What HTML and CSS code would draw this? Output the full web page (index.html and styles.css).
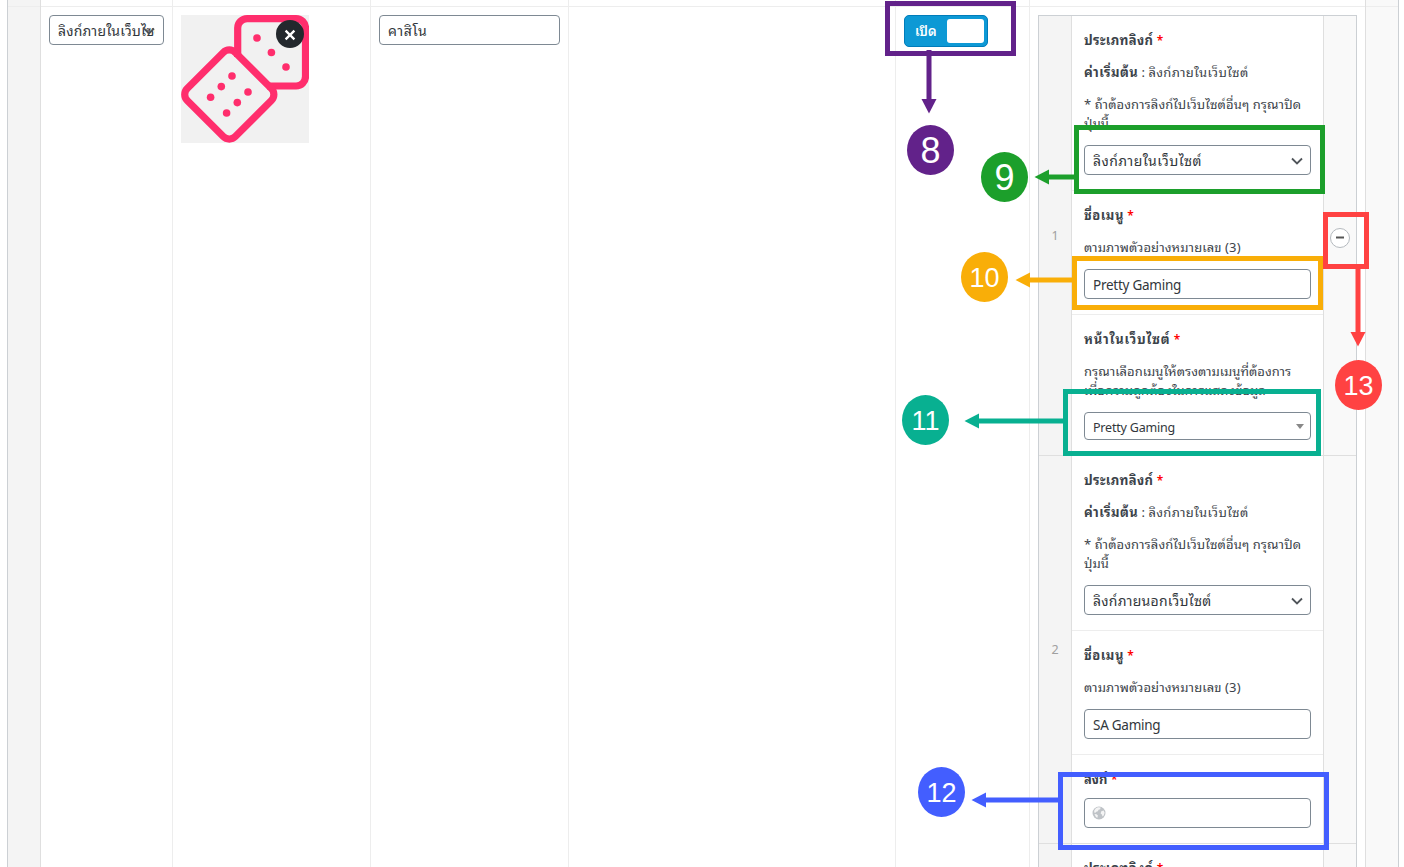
FILE: index.html
```html
<!DOCTYPE html>
<html lang="th">
<head>
<meta charset="utf-8">
<title>เมนู</title>
<link rel="stylesheet" href="styles.css">
</head>
<body>
<div class="table">
  <div class="handle"></div>
  <div class="cell c-type"><div class="input select clipped"><span class="t t-in1">ลิงก์ภายในเว็บไซต์</span><svg class="chev" viewBox="0 0 12 8"><path d="M1 1.500l5 5 5-5"/></svg></div></div>
  <div class="cell c-icon">
    <div class="thumb">
      <svg width="128" height="128" viewBox="0 0 128 128">
        <g fill="none" stroke="#ff2e6d" stroke-width="7.200">
          <path d="M56.700 42V13a9.400 9.400 0 0 1 9.400-9.400h49a9.400 9.400 0 0 1 9.400 9.400v48.600a9.400 9.400 0 0 1-9.400 9.400H86"/>
          <rect x="-34" y="-34" width="68" height="68" rx="8.500" transform="translate(48.300 79.500) rotate(45)"/>
        </g>
        <g fill="#ff2e6d"><circle cx="76" cy="23" r="3.800"/><circle cx="90.400" cy="37.500" r="3.800"/><circle cx="105" cy="52" r="3.800"/>
        <circle cx="51" cy="61" r="3.800"/><circle cx="40.300" cy="71.600" r="3.800"/><circle cx="29.600" cy="82.300" r="3.800"/><circle cx="67" cy="77" r="3.800"/><circle cx="56.300" cy="87.600" r="3.800"/><circle cx="45.600" cy="98" r="3.800"/></g>
        <circle cx="109" cy="19" r="14" fill="#23282d"/>
        <path d="M104.600 15.600l8.800 8.800m0-8.800l-8.800 8.800" stroke="#fff" stroke-width="2.300"/>
      </svg>
    </div>
  </div>
  <div class="cell c-name"><div class="input thai"><span class="t t-casino">คาสิโน</span></div></div>
  <div class="cell c-blank"></div>
  <div class="cell c-switch"><div class="switch"><span class="on">เปิด</span><span class="knob"></span></div></div>
  <div class="cell c-sub">
    <div class="sub">
      <div class="row">
        <div class="num">1</div>
        <div class="fields">
          <div class="field">
            <div class="label"><span class="t t-type">ประเภทลิงก์</span> <i>*</i></div>
            <p class="lead"><b class="t t-def">ค่าเริ่มต้น</b> : <span class="t t-in2">ลิงก์ภายในเว็บไซต์</span></p>
            <p><span class="t t-note">* ถ้าต้องการลิงก์ไปเว็บไซต์อื่นๆ กรุณาปิด</span><br><span>ปุ่มนี้</span></p>
            <div class="input select"><span class="t t-in1">ลิงก์ภายในเว็บไซต์</span><svg class="chev" viewBox="0 0 12 8"><path d="M1 1.500l5 5 5-5"/></svg></div>
          </div>
          <div class="field">
            <div class="label"><span class="t t-menu">ชื่อเมนู</span> <i>*</i></div>
            <p><span class="t t-ex">ตามภาพตัวอย่างหมายเลข (3)</span></p>
            <div class="input latin"><span>Pretty Gaming</span></div>
          </div>
          <div class="field">
            <div class="label"><span class="t t-page">หน้าในเว็บไซต์</span> <i>*</i></div>
            <p><span class="t t-l1">กรุณาเลือกเมนูให้ตรงตามเมนูที่ต้องการ</span><br><span class="t t-l2">เพื่อความถูกต้องในการแสดงข้อมูล</span></p>
            <div class="input select2"><span>Pretty Gaming</span><span class="tri"></span></div>
          </div>
        </div>
        <div class="act"><svg class="minus" viewBox="0 0 20 20"><circle cx="10" cy="10" r="9.500"/><path d="M6 9.500h8"/></svg></div>
      </div>
      <div class="row">
        <div class="num">2</div>
        <div class="fields">
          <div class="field">
            <div class="label"><span class="t t-type">ประเภทลิงก์</span> <i>*</i></div>
            <p class="lead"><b class="t t-def">ค่าเริ่มต้น</b> : <span class="t t-in2">ลิงก์ภายในเว็บไซต์</span></p>
            <p><span class="t t-note">* ถ้าต้องการลิงก์ไปเว็บไซต์อื่นๆ กรุณาปิด</span><br><span>ปุ่มนี้</span></p>
            <div class="input select"><span class="t t-out">ลิงก์ภายนอกเว็บไซต์</span><svg class="chev" viewBox="0 0 12 8"><path d="M1 1.500l5 5 5-5"/></svg></div>
          </div>
          <div class="field">
            <div class="label"><span class="t t-menu">ชื่อเมนู</span> <i>*</i></div>
            <p><span class="t t-ex">ตามภาพตัวอย่างหมายเลข (3)</span></p>
            <div class="input latin"><span>SA Gaming</span></div>
          </div>
          <div class="field url">
            <div class="label"><span>ลิงก์</span> <i>*</i></div>
            <div class="input"><svg class="globe" viewBox="0 0 14 14"><circle cx="7" cy="7" r="6.500"/><path d="M6 1.300l2.600.3-.4 1.600-1.700.6-.6 1.400-1.600.5-.9 1-1.300-.2.300-2.300 1.500-2zM2.500 8l2 .2 1.400 1.300-.5 2.300-1.500-.8zM9.300 5.200l2.300-.7 1 2.300-.9 2.800-1.200.9-.6-1.900-1.300-1.200z"/></svg></div>
          </div>
        </div>
        <div class="act"></div>
      </div>
      <div class="row">
        <div class="num"></div>
        <div class="fields"><div class="field"><div class="label"><span class="t t-type">ประเภทลิงก์</span> <i>*</i></div></div></div>
        <div class="act"></div>
      </div>
    </div>
  </div>
  <div class="remove"></div>
</div>
<svg class="notes" width="1404" height="867" viewBox="0 0 1404 867">
  <g fill="none" stroke-width="5">
    <g stroke="#62228a"><path d="M887.500 3.500h126v50h-126zM929 50v50"/></g>
    <g stroke="#1c9f2b"><path d="M1076.500 127.500h246v64h-246zM1048 177h27"/></g>
    <g stroke="#f9ae08"><path d="M1074.500 258.500h246v49h-246zM1029 280h44"/></g>
    <g stroke="#08b091"><path d="M1065.500 391.500h253v62h-253zM978 421h86"/></g>
    <g stroke="#435eff"><path d="M1060.500 774.500h266v73h-266zM985 800h74"/></g>
    <g stroke="#ff4242"><path d="M1325.500 214.500h41v52h-41zM1358 268v65"/></g>
  </g>
  <g fill="#62228a"><path d="M921.500 99h15l-7.500 14.500z"/><ellipse cx="930.500" cy="150" rx="23.500" ry="25"/></g>
  <g fill="#1c9f2b"><path d="M1049 169.500v15l-14.500-7.500z"/><ellipse cx="1004.500" cy="177" rx="23.500" ry="25"/></g>
  <g fill="#f9ae08"><path d="M1030 272.500v15l-14.500-7.500z"/><ellipse cx="984.500" cy="277" rx="23.500" ry="25"/></g>
  <g fill="#08b091"><path d="M979 413.500v15l-14.500-7.500z"/><ellipse cx="925.500" cy="420" rx="23.500" ry="25"/></g>
  <g fill="#435eff"><path d="M986 792.500v15l-14.500-7.500z"/><ellipse cx="941.500" cy="792" rx="23.500" ry="25"/></g>
  <g fill="#ff4242"><path d="M1350.500 332h15l-7.500 14.500z"/><ellipse cx="1358.500" cy="385" rx="23.500" ry="25"/></g>
  <g class="digits"><text class="big" x="930.500" y="163">8</text><text class="big" x="1004.500" y="190">9</text><text x="984.500" y="287">10</text><text x="925.500" y="430">11</text><text x="941.500" y="802">12</text><text x="1358.500" y="395">13</text></g>
</svg>
</body>
</html>
```
FILE: styles.css
```css
* { box-sizing: border-box; }
body { margin: 0; height: 867px; overflow: hidden; background: #fff; color: #3c434a; font: 13px/19px "Noto Sans", "Noto Sans Thai Looped", Loma, Waree, "Noto Sans Thai", sans-serif; position: relative; }
.table { display: grid; grid-template-columns: 34px 132px 198px 198px 327px 134px 335px 34px; margin-left: 7px; width: 1392px; height: 867px; }
.table > * { background: linear-gradient(#ededed, #ededed) 0 6px / 100% 1px no-repeat; }
.table > .handle { background-color: #f4f4f4; border-left: 1px solid #ccd0d4; border-right: 1px solid #dfdfdf; }
.table > .remove { background-color: #f9f9f9; border-left: 1px solid #dfdfdf; border-right: 1px solid #ccd0d4; }
.cell { padding: 15px 8px 0; border-right: 1px solid #ededed; min-width: 0; }
.c-sub { height: 867px; overflow: hidden; border-right: 0; }
.input { display: flex; align-items: center; position: relative; height: 30px; border: 1px solid #7e8993; border-radius: 4px; background: #fff; padding: 0 8px; font-size: 14px; line-height: 26px; color: #32373c; white-space: nowrap; }
.select, .thai { padding-top: 2px; }
.latin { padding-top: 2px; font-size: 13.5px; letter-spacing: -.26px; }
.clipped { width: 115px; }
.clipped .t { width: 98px; overflow: hidden; letter-spacing: .2px; }
.chev { position: absolute; right: 7px; top: 11px; width: 12px; height: 8px; fill: none; stroke: #50555a; stroke-width: 1.8; }
.clipped .chev { right: 8px; }
.thumb { width: 128px; height: 128px; background: #f1f1f1; }
.thumb svg { display: block; }
.c-name .input { width: 181px; }
.switch { display: flex; width: 84px; height: 32px; border: 1px solid #007cba; border-radius: 5px; background: #0d99d5; color: #fff; padding: 3px; }
.on { width: 39px; padding-left: 7px; font-weight: 600; font-size: 13px; line-height: 24px; }
.knob { width: 37px; height: 24px; border-radius: 3px; background: #fff; }
.sub { width: 319px; height: 880px; border: 1px solid #ccd0d4; }
.row { display: grid; grid-template-columns: 32px 253px 32px; border-bottom: 1px solid #dfdfdf; }
.num, .act { display: flex; align-items: center; justify-content: center; background: #f4f4f4; color: #a0a0a0; font-size: 12.5px; }
.act { background: #f9f9f9; }
.fields { border-left: 1px solid #dfdfdf; border-right: 1px solid #dfdfdf; }
.field { padding: 15px 12px; border-top: 1px solid #ededed; }
.field:first-child { border-top: 0; }
.label { height: 19px; margin-bottom: 13px; font-weight: 700; white-space: nowrap; }
.label i { color: #f00; font-style: normal; font-weight: 600; font-size: 12px; }
.url .label { margin-bottom: 9px; }
p { margin: 0 0 12px; white-space: nowrap; }
p.lead { margin-bottom: 13px; }
.select2 { height: 28px; padding-top: 3px; font-size: 12.5px; letter-spacing: -.2px; }
.tri { position: absolute; right: 6px; top: 11px; border: 4px solid transparent; border-top: 5px solid #888; border-bottom: 0; }
.minus { width: 20px; height: 20px; fill: #fff; stroke: #b4b9be; margin-top: 4px; }
.minus path { stroke: #555; stroke-width: 2; }
.globe { width: 14px; height: 14px; margin: 0 0 0 -1px; fill: #bfc3c7; }
.globe path { fill: #f4f4f4; }

/* tracking of the Thai strings */
.t-in1 { letter-spacing: .44px; }
.t-out { letter-spacing: .25px; }
.t-casino { letter-spacing: .6px; }
.t-type { letter-spacing: .35px; }
.t-def { letter-spacing: .43px; }
.t-in2 { letter-spacing: .33px; }
.t-note { letter-spacing: .1px; }
.t-menu { letter-spacing: .5px; }
.t-ex { letter-spacing: .1px; }
.t-page { letter-spacing: .8px; }
.t-l1 { letter-spacing: .02px; }
.t-l2 { letter-spacing: .05px; }

.notes { position: absolute; left: 0; top: 0; }
.digits { fill: #fff; font: 27px "Liberation Sans", sans-serif; text-anchor: middle; }
.big { font-size: 36px; }
```
